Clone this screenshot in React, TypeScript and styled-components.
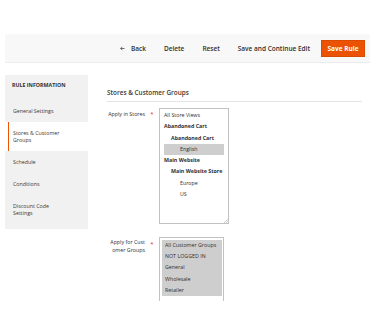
import React from 'react'
import styled, { createGlobalStyle } from 'styled-components'

const GlobalStyle = createGlobalStyle`
  body {
    margin: 0;
    background: #fff;
    font-family: "Open Sans", "DejaVu Sans", sans-serif;
    color: #303030;
  }
`

type Option = { label: string, level: number, bold?: boolean, selected?: boolean }

const storeOptions: Option[] = [
  { label: 'All Store Views', level: 0 },
  { label: 'Abandoned Cart', level: 0, bold: true },
  { label: 'Abandoned Cart', level: 1, bold: true },
  { label: 'English', level: 2, selected: true },
  { label: 'Main Website', level: 0, bold: true },
  { label: 'Main Website Store', level: 1, bold: true },
  { label: 'Europe', level: 2 },
  { label: 'US', level: 2 },
]

const groupOptions = ['All Customer Groups', 'NOT LOGGED IN', 'General', 'Wholesale', 'Retailer']

const navItems = ['General Settings', 'Stores & Customer Groups', 'Schedule', 'Conditions', 'Discount Code Settings']

const BackArrow = () => (
  <svg width="5" height="5" viewBox="0 0 10 10">
    <path d="M9 5H1.5M4.5 1.8L1.3 5l3.2 3.2" fill="none" stroke="#303030" strokeWidth="1.4" />
  </svg>
)

const Grip = () => (
  <GripIcon width="5" height="5" viewBox="0 0 5 5">
    <path d="M5 1L1 5M5 3L3 5" stroke="#aaa" strokeWidth="0.6" />
  </GripIcon>
)

const App: React.FC = () => {
  return (
    <>
      <GlobalStyle />
      <Page>
        <Toolbar>
          <TextButton><BackArrow />Back</TextButton>
          <TextButton>Delete</TextButton>
          <TextButton>Reset</TextButton>
          <TextButton>Save and Continue Edit</TextButton>
          <PrimaryButton>Save Rule</PrimaryButton>
        </Toolbar>
        <Main>
          <Sidebar>
            <SidebarTitle>Rule Information</SidebarTitle>
            {navItems.map(item => (
              <NavItem key={item} $active={item === 'Stores & Customer Groups'}>{item}</NavItem>
            ))}
          </Sidebar>
          <Content>
            <SectionTitle>Stores &amp; Customer Groups</SectionTitle>
            <Field>
              <Label>Apply in Stores</Label>
              <Required>*</Required>
              <StoreSelect>
                {storeOptions.map((option, i) => (
                  <StoreOption key={i} $level={option.level} $bold={option.bold} $selected={option.selected}>
                    {option.label}
                  </StoreOption>
                ))}
                <Grip />
              </StoreSelect>
            </Field>
            <Field $top={13}>
              <Label $wrap>Apply for Cust<br />omer Groups</Label>
              <Required $top={4}>*</Required>
              <GroupSelect>
                {groupOptions.map(group => (
                  <GroupOption key={group}>{group}</GroupOption>
                ))}
              </GroupSelect>
            </Field>
          </Content>
        </Main>
      </Page>
    </>
  )
}

const Page = styled.div`
  padding: 34px 4px 0 5px;
`

const Toolbar = styled.div`
  display: flex;
  align-items: center;
  justify-content: flex-end;
  height: 29px;
  padding-right: 5px;
  background: #f8f8f8;
  border-bottom: 1px solid #ececec;
  box-sizing: border-box;
`

const TextButton = styled.span`
  display: flex;
  align-items: center;
  gap: 6px;
  padding: 0 9px;
  font-size: 6.5px;
  font-weight: 600;
  color: #303030;
  white-space: nowrap;
`

const PrimaryButton = styled.span`
  display: flex;
  align-items: center;
  justify-content: center;
  margin-left: 2px;
  width: 44px;
  height: 17px;
  background: #eb5202;
  border: 1px solid #d94b00;
  box-sizing: border-box;
  color: #fff;
  font-size: 6.5px;
  font-weight: 700;
`

const Main = styled.div`
  display: flex;
  align-items: flex-start;
  gap: 19px;
  margin-top: 12px;
`

const Sidebar = styled.div`
  width: 83px;
  padding-bottom: 5px;
  background: #f1f1f1;
  flex-shrink: 0;
`

const SidebarTitle = styled.div`
  padding: 7px 7px 11px;
  font-size: 5.3px;
  line-height: 7px;
  font-weight: 700;
  text-transform: uppercase;
  color: #303030;
`

const NavItem = styled.div<{ $active?: boolean }>`
  padding: 7.5px 20px 7.5px 8px;
  font-size: 5.3px;
  line-height: 7px;
  color: #41362f;
  background: ${p => (p.$active ? '#fff' : 'transparent')};
  box-shadow: ${p => (p.$active ? 'inset 3px 0 0 #fff, inset 4px 0 0 #eb5202' : 'none')};
`

const Content = styled.div`
  width: 255px;
`

const SectionTitle = styled.div`
  padding: 14px 0 4px;
  font-size: 6.4px;
  line-height: 8px;
  font-weight: 600;
  color: #41362f;
  border-bottom: 1px solid #e3e3e3;
  margin-bottom: 6px;
`

const Field = styled.div<{ $top?: number }>`
  display: flex;
  align-items: flex-start;
  margin-top: ${p => p.$top || 0}px;
`

const Label = styled.div<{ $wrap?: boolean }>`
  width: 38px;
  padding-top: ${p => (p.$wrap ? 1 : 3)}px;
  text-align: right;
  font-size: 5.3px;
  line-height: ${p => (p.$wrap ? 8 : 7)}px;
  color: #303030;
`

const Required = styled.span<{ $top?: number }>`
  width: 14px;
  padding-top: ${p => p.$top || 3}px;
  text-align: center;
  color: #e22626;
  font-size: 6px;
  line-height: 7px;
`

const StoreSelect = styled.div`
  position: relative;
  width: 70px;
  height: 116px;
  padding: 1px 4px;
  box-sizing: border-box;
  border: 1px solid #c2c2c2;
`

const StoreOption = styled.div<{ $level: number, $bold?: boolean, $selected?: boolean }>`
  padding-left: ${p => [0, 7, 16][p.$level]}px;
  font-size: 5.3px;
  line-height: 11.3px;
  font-weight: ${p => (p.$bold ? 700 : 400)};
  color: #303030;
  background: ${p => (p.$selected ? '#cecece' : 'transparent')};
  white-space: nowrap;
`

const GripIcon = styled.svg`
  position: absolute;
  right: 0;
  bottom: 0;
`

const GroupSelect = styled.div`
  width: 65px;
  height: 64px;
  padding: 2px 1px 0 2px;
  box-sizing: border-box;
  border: 1px solid #c2c2c2;
  border-bottom: none;
`

const GroupOption = styled.div`
  padding-left: 3px;
  font-size: 5.3px;
  line-height: 11.2px;
  color: #303030;
  background: #cecece;
  white-space: nowrap;
`

export default App
